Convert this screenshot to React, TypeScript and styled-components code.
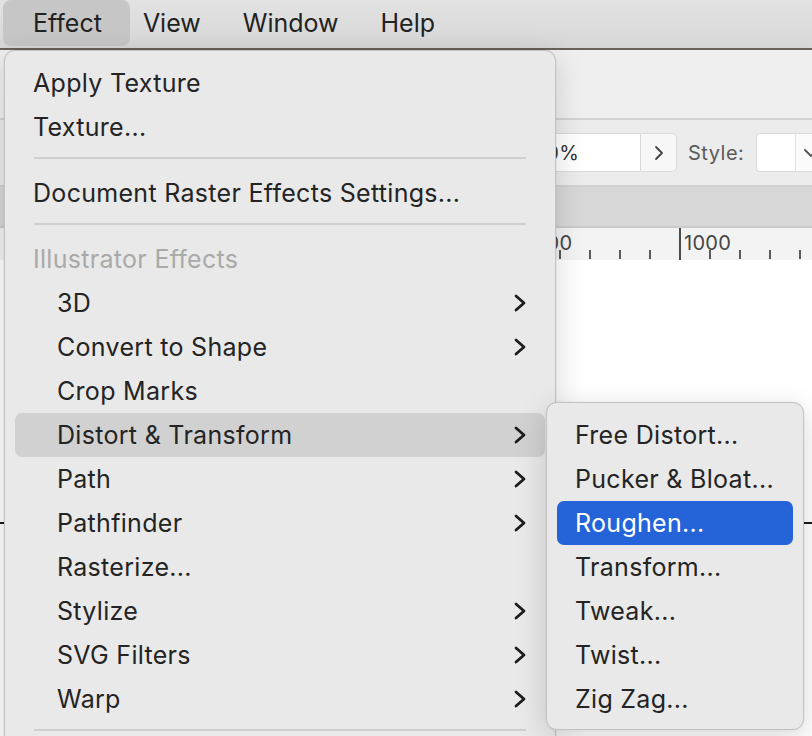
import React from "react";
import styled, { createGlobalStyle } from "styled-components";

const Global = createGlobalStyle`
  html, body { margin: 0; padding: 0; }
  body {
    width: 812px; height: 736px; overflow: hidden;
    font-family: Inter, "Noto Sans", "Liberation Sans", sans-serif;
    background: #ffffff;
  }
`;

const Root = styled.div`
  position: relative;
  width: 812px;
  height: 736px;
  overflow: hidden;
  display: flex;
  flex-direction: column;
`;

const MenuBar = styled.div`
  height: 48px;
  flex: none;
  display: flex;
  align-items: stretch;
  padding-left: 3px;
  background: linear-gradient(#e2e2e2, #d7d7d7);
  border-bottom: 2px solid #66615c;
`;

const MenuTitle = styled.div<{ $active?: boolean }>`
  display: flex;
  align-items: center;
  font-size: 25px;
  color: #222;
  padding: ${(p) => (p.$active ? "0 28px 0 30px" : "0 21px")};
  margin-right: ${(p) => (p.$active ? "-8px" : "0")};
  margin-bottom: 2px;
  border-radius: 8px;
  background: ${(p) => (p.$active ? "#c6c6c6" : "transparent")};
`;

const Workspace = styled.div`
  flex: 1;
  display: flex;
  flex-direction: column;
`;

const TopPanel = styled.div`
  height: 68px;
  background: #efefef;
  border-bottom: 2px solid #d2d2d2;
`;

const ControlBar = styled.div`
  height: 65px;
  display: flex;
  align-items: center;
  padding-left: 512px;
  background: #ececec;
  border-bottom: 2px solid #d0d0d0;
  font-size: 20px;
  color: #4a4a4a;
  overflow: hidden;
  & > * { flex: none; }
`;

const NumberField = styled.div`
  width: 128px;
  height: 39px;
  box-sizing: border-box;
  display: flex;
  align-items: center;
  padding-left: 12px;
  background: #fff;
  border: 1px solid #dadada;
  border-right: none;
  border-radius: 5px 0 0 5px;
  color: #333;
  letter-spacing: 0.3px;
`;

const StepButton = styled.div`
  width: 37px;
  height: 39px;
  box-sizing: border-box;
  display: flex;
  align-items: center;
  justify-content: center;
  background: #f7f7f7;
  border: 1px solid #dadada;
  border-radius: 0 5px 5px 0;
  color: #444;
`;

const FieldLabel = styled.div`
  margin-left: 11px;
  color: #5a5a5a;
  letter-spacing: 0.5px;
`;

const Swatch = styled.div`
  margin-left: 12px;
  width: 40px;
  height: 39px;
  box-sizing: border-box;
  background: #fff;
  border: 1px solid #dadada;
  border-right: 1px solid #e0e0e0;
  border-radius: 4px 0 0 4px;
`;

const DropButton = styled.div`
  width: 40px;
  height: 39px;
  box-sizing: border-box;
  display: flex;
  align-items: center;
  padding-left: 7px;
  background: #fbfbfb;
  border: 1px solid #dadada;
  border-left: none;
`;

const TabBand = styled.div`
  height: 39px;
  background: #d7d7d7;
  border-bottom: 2px solid #cbcbcb;
`;

const Ruler = styled.div`
  height: 32px;
  display: flex;
  padding-left: 19px;
  background: #f3f3f3;
  overflow: hidden;
`;

const TickCell = styled.div<{ $major?: boolean }>`
  flex: none;
  width: 30px;
  display: flex;
  align-items: flex-start;
  font-size: 20px;
  color: #454545;
  line-height: 1;
  padding-top: 5px;
  box-sizing: border-box;
  border-left: 2px solid transparent;
  border-image: ${(p) =>
    p.$major
      ? "linear-gradient(#4a4a4a, #4a4a4a) 1"
      : "linear-gradient(to bottom, transparent 0, transparent 22px, #5a5a5a 22px, #5a5a5a 30px, transparent 30px) 1"};
`;

const TickLabel = styled.span`
  padding-left: 3px;
  white-space: nowrap;
  letter-spacing: 0.3px;
`;

const Canvas = styled.div`
  flex: 1;
  background: #ffffff;
`;

const ArtLine = styled.div`
  margin-top: 262px;
  height: 2px;
  background: #1a1a1a;
`;

const Menu = styled.div<{ $left: number; $top: number; $width: number; $height: number }>`
  position: absolute;
  left: ${(p) => p.$left}px;
  top: ${(p) => p.$top}px;
  width: ${(p) => p.$width}px;
  height: ${(p) => p.$height}px;
  box-sizing: border-box;
  padding: 10px 10px 0;
  background: #e9e9e9;
  border: 1px solid #c3c3c3;
  border-radius: 11px;
  box-shadow: 0 8px 30px rgba(0, 0, 0, 0.16), 0 0 0 0.5px rgba(0, 0, 0, 0.05);
  display: flex;
  flex-direction: column;
`;

const Item = styled.div<{ $indent?: boolean; $state?: "hover" | "selected"; $disabled?: boolean }>`
  height: 44px;
  flex: none;
  display: flex;
  align-items: center;
  justify-content: space-between;
  padding: 0 19px 0 ${(p) => (p.$indent ? 42 : 18)}px;
  border-radius: 7px;
  font-size: 25px;
  letter-spacing: 0.3px;
  white-space: nowrap;
  color: ${(p) => (p.$state === "selected" ? "#ffffff" : p.$disabled ? "#a9a9a9" : "#242424")};
  background: ${(p) =>
    p.$state === "selected" ? "#2563d8" : p.$state === "hover" ? "#d1d1d1" : "transparent"};
`;

const Separator = styled.div`
  flex: none;
  height: 2px;
  margin: 8px 19px 12px;
  background: #cfcfcf;
`;

const Chevron = () => (
  <svg width="12" height="18" viewBox="0 0 12 18">
    <polyline points="2,2 10,9 2,16" fill="none" stroke="#1c1c1c" strokeWidth="2.8" strokeLinecap="round" strokeLinejoin="round" />
  </svg>
);

const SmallChevron = () => (
  <svg width="10" height="16" viewBox="0 0 10 16">
    <polyline points="2,2 8,8 2,14" fill="none" stroke="#444" strokeWidth="1.8" strokeLinecap="round" strokeLinejoin="round" />
  </svg>
);

const DownChevron = () => (
  <svg width="16" height="10" viewBox="0 0 16 10">
    <polyline points="2,2 8,8 14,2" fill="none" stroke="#555" strokeWidth="1.8" strokeLinecap="round" strokeLinejoin="round" />
  </svg>
);

type Entry =
  | { kind: "sep" }
  | { kind: "item"; label: string; indent?: boolean; sub?: boolean; disabled?: boolean; state?: "hover" | "selected" };

const mainItems: Entry[] = [
  { kind: "item", label: "Apply Texture" },
  { kind: "item", label: "Texture..." },
  { kind: "sep" },
  { kind: "item", label: "Document Raster Effects Settings..." },
  { kind: "sep" },
  { kind: "item", label: "Illustrator Effects", disabled: true },
  { kind: "item", label: "3D", indent: true, sub: true },
  { kind: "item", label: "Convert to Shape", indent: true, sub: true },
  { kind: "item", label: "Crop Marks", indent: true },
  { kind: "item", label: "Distort & Transform", indent: true, sub: true, state: "hover" },
  { kind: "item", label: "Path", indent: true, sub: true },
  { kind: "item", label: "Pathfinder", indent: true, sub: true },
  { kind: "item", label: "Rasterize...", indent: true },
  { kind: "item", label: "Stylize", indent: true, sub: true },
  { kind: "item", label: "SVG Filters", indent: true, sub: true },
  { kind: "item", label: "Warp", indent: true, sub: true },
  { kind: "sep" },
];

const subItems: { label: string; selected?: boolean }[] = [
  { label: "Free Distort..." },
  { label: "Pucker & Bloat..." },
  { label: "Roughen...", selected: true },
  { label: "Transform..." },
  { label: "Tweak..." },
  { label: "Twist..." },
  { label: "Zig Zag..." },
];

export default function App() {
  const ticks = Array.from({ length: 27 }, (_, i) => i);
  return (
    <Root>
      <Global />
      <MenuBar>
        <MenuTitle $active>Effect</MenuTitle>
        <MenuTitle>View</MenuTitle>
        <MenuTitle>Window</MenuTitle>
        <MenuTitle>Help</MenuTitle>
      </MenuBar>
      <Workspace>
        <TopPanel />
        <ControlBar>
          <NumberField>100%</NumberField>
          <StepButton>
            <SmallChevron />
          </StepButton>
          <FieldLabel>Style:</FieldLabel>
          <Swatch />
          <DropButton>
            <DownChevron />
          </DropButton>
        </ControlBar>
        <TabBand />
        <Ruler>
          {ticks.map((i) => {
            const major = i % 5 === 2;
            return (
              <TickCell key={i} $major={major}>
                {major && i >= 12 ? <TickLabel>{((i - 12) / 5) * 500}</TickLabel> : null}
              </TickCell>
            );
          })}
        </Ruler>
        <Canvas>
          <ArtLine />
        </Canvas>
      </Workspace>

      <Menu $left={4} $top={50} $width={552} $height={720}>
        {mainItems.map((e, idx) =>
          e.kind === "sep" ? (
            <Separator key={idx} />
          ) : (
            <Item key={idx} $indent={e.indent} $disabled={e.disabled} $state={e.state}>
              <span>{e.label}</span>
              {e.sub ? <Chevron /> : null}
            </Item>
          )
        )}
      </Menu>

      <Menu $left={546} $top={402} $width={258} $height={328}>
        {subItems.map((s) => (
          <Item key={s.label} $state={s.selected ? "selected" : undefined}>
            <span>{s.label}</span>
          </Item>
        ))}
      </Menu>
    </Root>
  );
}
